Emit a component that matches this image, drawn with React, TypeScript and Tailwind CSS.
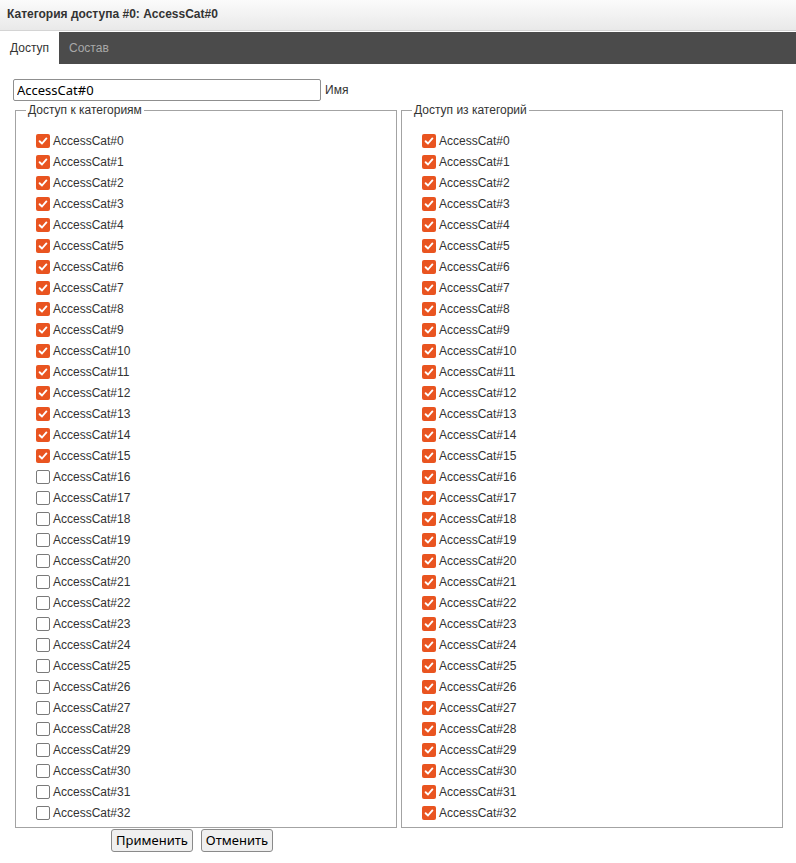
import React from "react";

const cats = Array.from({ length: 40 }, (_, i) => `AccessCat#${i}`);

function Box({ checked }: { checked: boolean }) {
  if (checked) {
    return (
      <span className="flex h-[14px] w-[14px] shrink-0 items-center justify-center rounded-[2px] bg-[#e95420]">
        <svg width="10" height="10" viewBox="0 0 10 10">
          <path d="M1.6 5.2 L4 7.5 L8.4 2.4" fill="none" stroke="#fff" strokeWidth="1.9" strokeLinecap="round" strokeLinejoin="round" />
        </svg>
      </span>
    );
  }
  return <span className="h-[14px] w-[14px] shrink-0 rounded-[2px] border border-[#7a7a7a] bg-white" />;
}

function CatList({ title, isChecked }: { title: string; isChecked: (i: number) => boolean }) {
  return (
    <fieldset className="h-[727px] w-[382px] overflow-hidden border border-[#a3a3a3] p-0">
      <legend className="ml-[10px] px-[2px] text-[12px] text-[#333]">{title}</legend>
      <div className="pl-[20px] pt-[11px]">
        {cats.map((c, i) => (
          <div key={c} className="flex h-[21px] items-center gap-[3px]">
            <Box checked={isChecked(i)} />
            <span className="text-[12px] text-[#333]">{c}</span>
          </div>
        ))}
      </div>
    </fieldset>
  );
}

export default function App() {
  return (
    <div className="min-h-[863px] bg-white font-['Liberation_Sans',Arial,sans-serif]">
      <div className="flex h-[31px] items-center border-b border-[#d4d4d4] bg-gradient-to-b from-[#fbfbfb] to-[#e9e9e9] px-[7px] pb-[2px] text-[12px] font-bold text-[#333]">
        Категория доступа #0: AccessCat#0
      </div>
      <div className="mt-[1px] flex h-[32px] bg-[#4b4b4b] text-[12px]">
        <div className="flex w-[59px] items-center justify-center bg-white text-[#333]">Доступ</div>
        <div className="flex items-center px-[10px] text-[#a8a8a8]">Состав</div>
      </div>
      <div className="flex items-center gap-[4px] pl-[13px] pt-[15px]">
        <input
          readOnly
          value="AccessCat#0"
          className="h-[22px] w-[308px] rounded-[2px] border border-[#8f8f8f] px-[3px] font-['Noto_Sans',sans-serif] text-[13px] text-black outline-none"
        />
        <span className="text-[12px] text-[#333]">Имя</span>
      </div>
      <div className="flex gap-[4px] pl-[15px]">
        <CatList title="Доступ к категориям" isChecked={(i) => i < 16} />
        <CatList title="Доступ из категорий" isChecked={() => true} />
      </div>
      <div className="flex gap-[8px] pl-[111px] pt-[1px] font-['Noto_Sans',sans-serif] text-[13px] text-black">
        <button className="h-[23px] rounded-[3px] border border-[#8a8a8a] bg-[#efefef] px-[4px]">Применить</button>
        <button className="h-[23px] rounded-[3px] border border-[#8a8a8a] bg-[#efefef] px-[4px]">Отменить</button>
      </div>
    </div>
  );
}
